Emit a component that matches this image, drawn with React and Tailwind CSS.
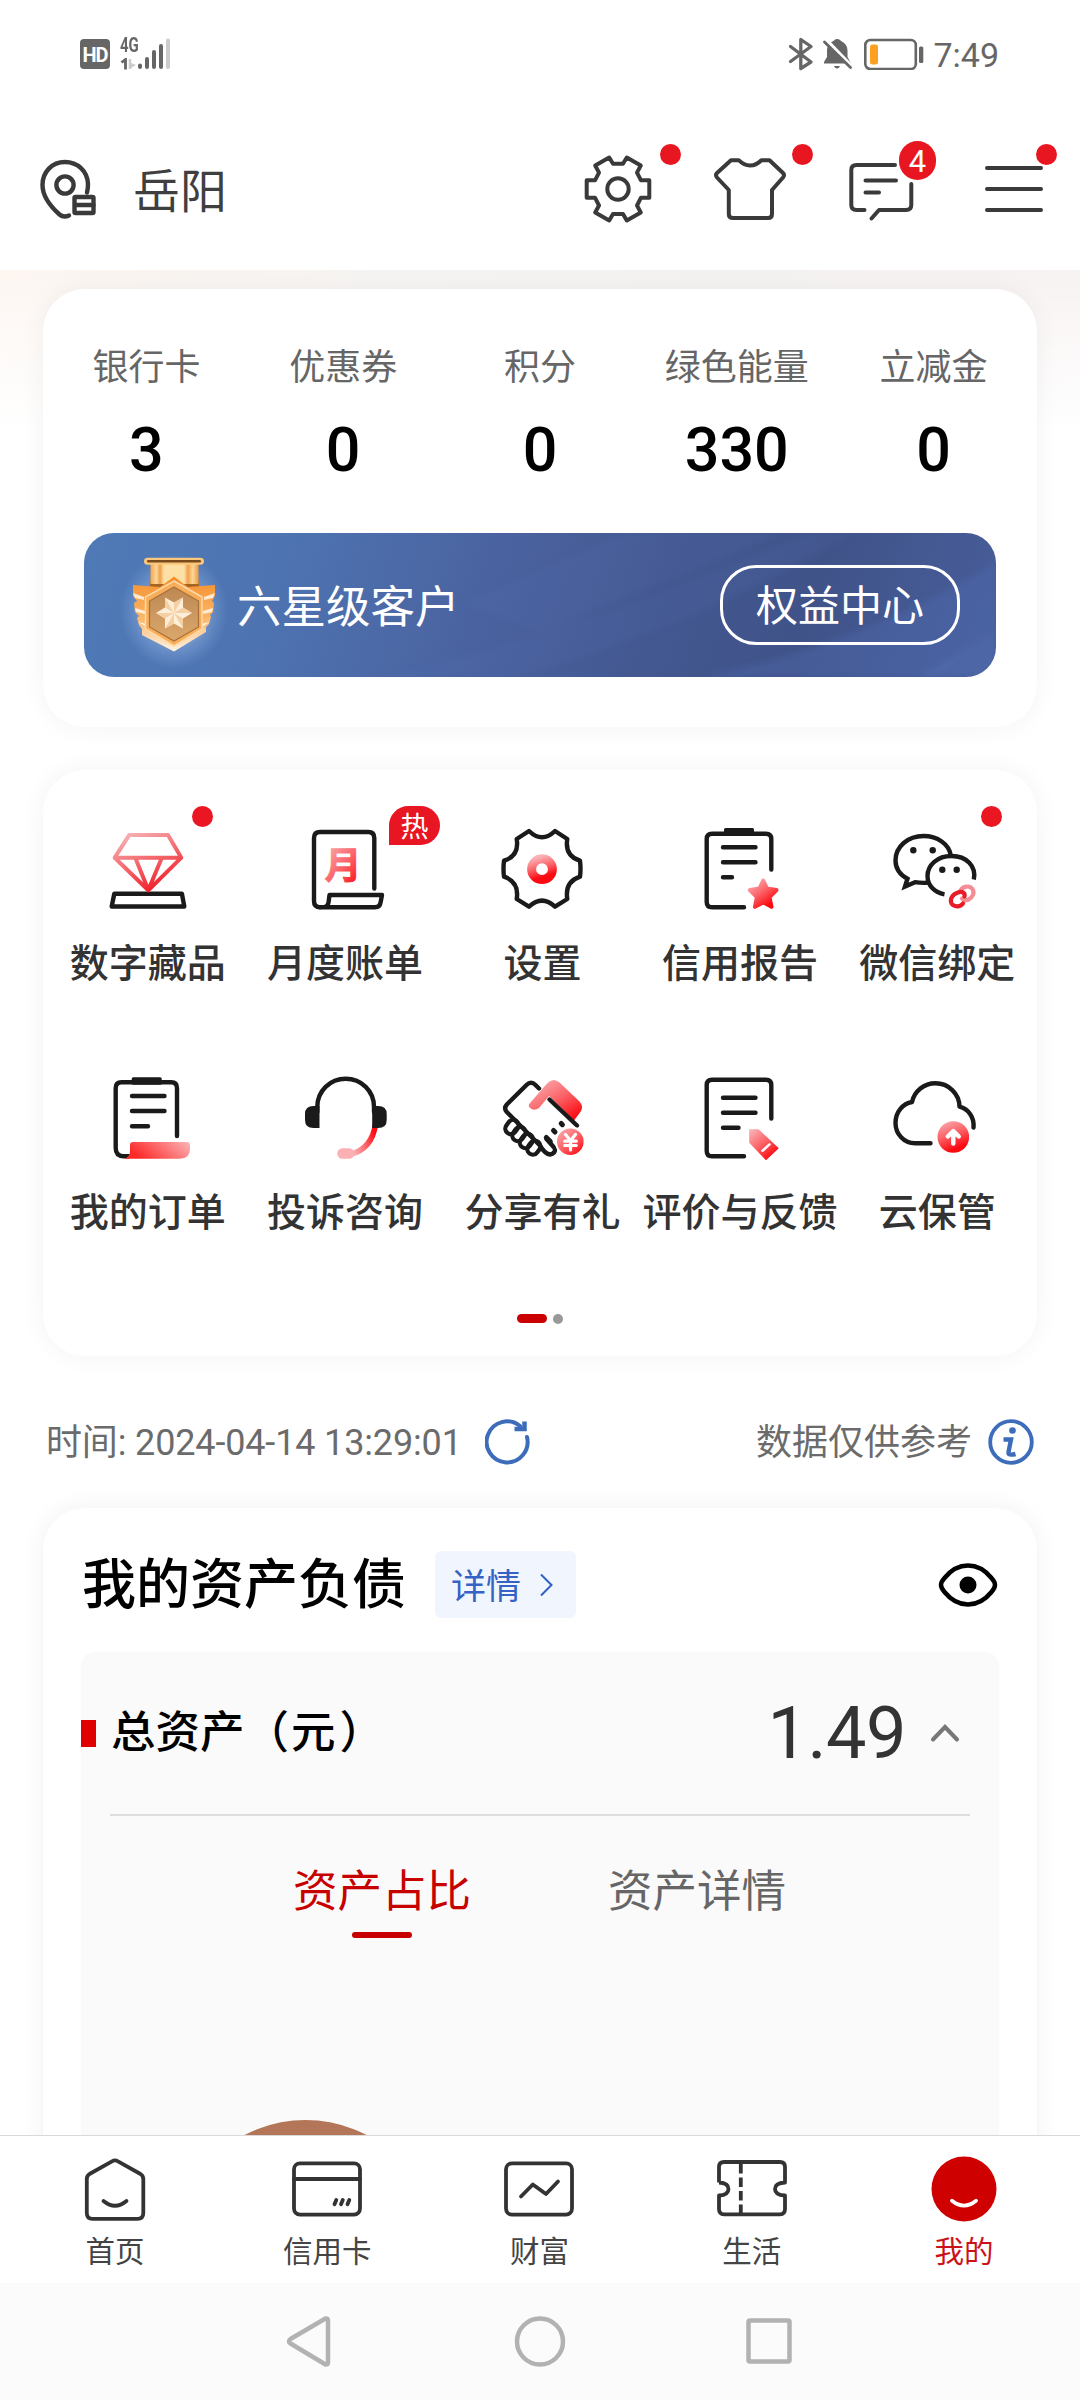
const INK = '#1a1a1a';

function RedGradient({ id, x1 = 0, y1 = 0, x2 = 1, y2 = 1 }) {
  return (
    <defs>
      <linearGradient id={id} x1={x1} y1={y1} x2={x2} y2={y2}>
        <stop offset="0" stopColor="#f9b4b8" />
        <stop offset="0.5" stopColor="#fb6368" />
        <stop offset="0.95" stopColor="#fb0a10" />
      </linearGradient>
    </defs>
  );
}

function FnSvg({ children }) {
  return (
    <svg
      viewBox="0 0 88 88"
      className="h-[88px] w-[88px] overflow-visible"
      fill="none"
      stroke={INK}
      strokeWidth="4.4"
      strokeLinecap="round"
      strokeLinejoin="round"
      aria-hidden="true"
    >
      {children}
    </svg>
  );
}

function DiamondIcon() {
  return (
    <FnSvg>
      <defs>
        <linearGradient id="gem" gradientUnits="userSpaceOnUse" x1="30" y1="8" x2="52" y2="62">
          <stop offset="0" stopColor="#f6adb0" />
          <stop offset="1" stopColor="#f2252e" />
        </linearGradient>
      </defs>
      <path d="M10.3 68.7h67.6l2.4 12.8H7.7z" />
      <path
        stroke="url(#gem)"
        strokeWidth="4"
        d="M25.3 9.9H64l13.3 22.8-33 32.6-33.6-32.6zM10.7 32.8l66.6.01M31.8 34l12.5 31L57.3 34"
      />
    </FnSvg>
  );
}

function BillIcon() {
  return (
    <FnSvg>
      <RedGradient id="bill" />
      <path d="M73.3 63.5V13q0-6-6-6H19q-6 0-6 6v63q0 6.3 6 6.3" />
      <path d="M19 82.3h55q5 0 5.6-5L81 70H28.5L27.6 77q-.6 5.3-6 5.3" />
      <text
        x="42"
        y="53.5"
        textAnchor="middle"
        stroke="url(#bill)"
        strokeWidth="1"
        fill="url(#bill)"
        className="text-[37px] font-bold"
      >
        月
      </text>
    </FnSvg>
  );
}

function SettingsIcon() {
  return (
    <FnSvg>
      <RedGradient id="set" x2="0.3" />
      <path d="M31 6Q44 18.5 57 6L69.3 14Q66.5 31 82 35.7Q83 44 82 51.7Q66.5 57 69.3 74L57 81.7Q44 69.5 31 81.7L18.7 74Q21.5 57 6 51.7Q5 44 6 35.7Q21.5 31 18.7 14Z" />
      <circle cx="44" cy="44.2" r="10.4" stroke="url(#set)" strokeWidth="9" />
    </FnSvg>
  );
}

function ReportIcon() {
  return (
    <FnSvg>
      <RedGradient id="star" x2="0.7" />
      <path d="M75.3 44.5V14q0-5.3-5.3-5.3H16q-5.3 0-5.3 5.3v63q0 5.3 5.3 5.3h32" />
      <rect x="28" y="3" width="30" height="7.5" rx="1.5" fill={INK} stroke="none" />
      <path d="M27 22.3h32.5M27 37.3h32.5M27 52.3h9" />
      <path
        fill="url(#star)"
        stroke="url(#star)"
        strokeWidth="4"
        d="M67.2 55.5l3.8 8 9.5 1.5-7 7 2 9.8-8.3-4.5-8.3 4.5 2-9.8-7-7 9.500-1.500z"
      />
    </FnSvg>
  );
}

function WechatIcon() {
  return (
    <FnSvg>
      <g strokeLinecap="butt" strokeLinejoin="miter">
        <path d="M57.8 30.5C56 19 44.5 11 30.5 11C15 11 2.5 21.5 2.5 35.5C2.5 43.5 7.5 50 14.5 53.8L12 61.5L22 57.2Q28 58.2 34.8 57.8" />
        <path d="M80.8 54.5C83.5 41 73.5 31 58.5 31C44.5 31 34.5 40 34.5 51C34.5 60.5 41.5 67.5 51.5 69.3" />
      </g>
      <g fill={INK} stroke="none">
        <circle cx="20.3" cy="25.3" r="3.2" />
        <circle cx="39.7" cy="25.3" r="3.2" />
        <circle cx="49.3" cy="44.7" r="3.2" />
        <circle cx="63.7" cy="44.7" r="3.2" />
      </g>
      <g strokeWidth="4.2">
        <path d="M67.5 65.5C70 61 76.5 60 79.5 64C82 68 79.5 72.5 75.5 74.5C73 75.8 70.5 75.5 69 73.5" stroke="#f58d94" />
        <path d="M71.5 71.5C72.5 67.5 68.5 66 65 67.5C59 69.5 56.5 74.5 58.5 78.5C61 82.5 67.5 82 70 78.5" stroke="#e81c26" />
      </g>
    </FnSvg>
  );
}

function OrderIcon() {
  return (
    <FnSvg>
      <defs>
        <linearGradient id="order" x1="0" y1="0.3" x2="1" y2="0">
          <stop offset="0.05" stopColor="#fd2a2a" />
          <stop offset="1" stopColor="#fbb5b8" />
        </linearGradient>
      </defs>
      <path d="M73 62V14q0-5.7-5.7-5.7H17.5q-5.800 0-5.800 5.7v60q0 8 8 8.3h5" />
      <rect x="27.7" y="3.2" width="30" height="7.5" rx="1.5" fill={INK} stroke="none" />
      <path d="M28 22h32.5M28 37h32.5M28 52.2h16" />
      <path
        fill="url(#order)"
        stroke="none"
        d="M29 68h54q3 0 3 3v4q0 9.7-10 9.7H19q7-.7 7-7.7v-6q0-3 3-3z"
      />
    </FnSvg>
  );
}

function HeadsetIcon() {
  return (
    <FnSvg>
      <RedGradient id="mic" x1="0" y1="0.6" x2="1" y2="0.2" />
      <path d="M16.3 38V33C16.3 17 29 4.8 44.7 4.8S73 17 73 33v5" />
      <path stroke="url(#mic)" strokeWidth="5.5" strokeLinecap="butt" d="M74.5 50Q71 75 49 80.5" />
      <rect x="36.3" y="74.3" width="17" height="10.5" rx="5.2" fill="#fbb0b4" stroke="none" />
      <path fill={INK} stroke="none" d="M18.5 32v22h-6q-8.5 0-8.5-8V40q0-8 8.5-8zM71.2 32v22h6q8.5 0 8.5-8V40q0-8-8.5-8z" />
    </FnSvg>
  );
}

function ShareIcon() {
  return (
    <FnSvg>
      <RedGradient id="share" x1="0.1" x2="0.9" />
      <path d="M41 14.5L37.5 11Q33 6.5 28.5 11L8.8 30.5Q5.5 34.3 8.8 38L41.5 71Q47 80 52 80.5Q57.5 79.5 57 74.5L48.5 65" />
      <path
        fill="url(#share)"
        stroke="none"
        d="M32 29L49 9.5q6-6.5 12.5-1L81 27q5.5 5.5 1 11.5L76 46.5L51 22L41 34q-5 3.5-9 0-2.5-2.5 0-5z"
      />
      <path d="M51.5 25.5L79 51.5" />
      <path d="M63.2 49.5l1.2 1.2M55.5 56.5l1.5 1.5M48.3 63.5l4 4" strokeWidth="5" />
      <g strokeWidth="4.2">
        <rect x="8.5" y="45.5" width="11" height="15" rx="5.5" transform="rotate(35 14 53)" />
        <rect x="15.5" y="52.5" width="11" height="15" rx="5.5" transform="rotate(35 21 60)" />
        <rect x="23" y="59.5" width="11" height="15" rx="5.5" transform="rotate(35 28.5 67)" />
        <rect x="30.5" y="66.5" width="11" height="14.5" rx="5.5" transform="rotate(35 36 73.5)" />
      </g>
      <circle cx="72.3" cy="67.7" r="14.3" fill="url(#share)" stroke="#fff" strokeWidth="2" />
      <path stroke="#fff" strokeWidth="3.2" d="M67.5 60.5l5 6 5-6M72.5 66.5v9.5M66.7 67.2h11.6M66.7 71.5h11.6" />
    </FnSvg>
  );
}

function FeedbackIcon() {
  return (
    <FnSvg>
      <RedGradient id="pen" x2="0.8" />
      <path d="M75.3 44.5V11q0-5.3-5.3-5.3H16q-5.3 0-5.3 5.3v66q0 5.3 5.3 5.3h32" />
      <path d="M27 23.7h32.5M27 38.7h32.5M27 53.7h15.5" />
      <path
        fill="url(#pen)"
        stroke="url(#pen)"
        strokeWidth="1.5"
        d="M53.8 56h8.5l19.5 18.3L70 85.3L54 68.5z"
      />
      <path stroke="#fff" strokeWidth="2.5" d="M66.5 76.7l7-6.3" />
    </FnSvg>
  );
}

function CloudIcon() {
  return (
    <FnSvg>
      <RedGradient id="cloud" x2="0.4" />
      <path d="M37.5 69.3H22C11 69.3 2.5 60 2.5 49C2.5 38 10 29.5 19 28C21.5 17 31 9.3 42.5 9.3C55.5 9.3 66.3 19.5 66.5 32.7C75.5 35 81.5 43.5 80.5 53.5" />
      <circle cx="60.3" cy="63" r="15.8" fill="url(#cloud)" stroke="none" />
      <path stroke="#fff" d="M60.3 69.5V58M54.8 62.5l5.5-5.5 5.5 5.5" />
    </FnSvg>
  );
}

const stats = [
  { label: '银行卡', value: '3' },
  { label: '优惠券', value: '0' },
  { label: '积分', value: '0' },
  { label: '绿色能量', value: '330' },
  { label: '立减金', value: '0' },
];

const functions = [
  { label: '数字藏品', icon: DiamondIcon, dot: true },
  { label: '月度账单', icon: BillIcon, tag: '热' },
  { label: '设置', icon: SettingsIcon },
  { label: '信用报告', icon: ReportIcon },
  { label: '微信绑定', icon: WechatIcon, dot: true },
  { label: '我的订单', icon: OrderIcon },
  { label: '投诉咨询', icon: HeadsetIcon },
  { label: '分享有礼', icon: ShareIcon },
  { label: '评价与反馈', icon: FeedbackIcon },
  { label: '云保管', icon: CloudIcon },
];

function StatusBar() {
  return (
    <div className="flex h-[108px] shrink-0 items-center pr-[80px] pl-[80px] text-[#666]">
      <span className="flex h-[30px] w-[30px] items-center justify-center rounded-[4px] bg-[#666] pt-[2px] text-[20px] leading-none font-bold tracking-[-1px] text-white">
        HD
      </span>
      <div className="ml-[10px] flex h-[32px] w-[19px] flex-col justify-between">
        <span className="origin-left scale-x-75 text-[20px] leading-[15px] font-bold">4G</span>
        <svg viewBox="0 0 19 12" className="h-[12px] w-[19px]" aria-hidden="true">
          <path d="M1.5 4.5L5.5 1.5V11.5" fill="none" stroke="#666" strokeWidth="2.8" />
          <path d="M10 1v10" stroke="#ccc" strokeWidth="2.5" />
          <path d="M11 5l5 2-5 3z" fill="#ccc" />
        </svg>
      </div>
      <svg viewBox="0 0 34 32" className="-ml-px h-[32px] w-[34px]" fill="none" strokeWidth="4" strokeLinecap="round" aria-hidden="true">
        <path d="M2 27.5v1.5M9 21v8M16 14v15M23 8v21" stroke="#666" />
        <path d="M30 2.5V29" stroke="#ccc" />
      </svg>

      <div className="ml-auto flex items-center">
        <svg viewBox="0 0 26 34" className="h-[34px] w-[26px]" fill="none" stroke="#666" strokeWidth="3.3" strokeLinejoin="round" strokeLinecap="round" aria-hidden="true">
          <path d="M2.5 9.5L23 25 12.8 31.5V2.5L23 9.5 2.5 24.5" />
        </svg>
        <svg viewBox="0 0 30 32" className="ml-[8px] h-[32px] w-[30px]" aria-hidden="true">
          <path fill="#666" d="M15 1c2.5 0 3 1.5 4.5 2.3C24 5.5 25.5 9 25.5 13v6l3.5 6.5H2V24l3-5v-6c0-5 2.5-8.5 6-9.8C12.5 2.5 13 1 15 1zM12 28h6q-1 2.5-3 2.5T12 28z" />
          <path d="M3 .5l27 28" stroke="#fff" strokeWidth="3.5" />
          <path d="M2.5 4L28.5 29.5" stroke="#666" strokeWidth="2.8" strokeLinecap="round" />
        </svg>
        <svg viewBox="0 0 60 32" className="ml-[12px] h-[32px] w-[60px]" aria-hidden="true">
          <rect x="1.3" y="2" width="50.5" height="29" rx="5" fill="none" stroke="#666" strokeWidth="2.6" />
          <rect x="6" y="6.5" width="8" height="20" rx="2.5" fill="#fd9f20" />
          <rect x="55" y="8.5" width="4.3" height="16.5" rx="1.5" fill="#666" />
        </svg>
        <span className="mr-px ml-[9px] pt-px text-[34px] leading-none">7:49</span>
      </div>
    </div>
  );
}

function HeaderIcon({ children, badge }) {
  return (
    <div className="relative flex h-[76px] w-[132px] items-center justify-center">
      <svg
        viewBox="0 0 76 76"
        className="h-[76px] w-[76px]"
        fill="none"
        stroke="#3a3a3a"
        strokeWidth="4"
        strokeLinecap="round"
        strokeLinejoin="round"
        aria-hidden="true"
      >
        {children}
      </svg>
      {badge}
    </div>
  );
}

const headerDot = 'absolute -top-[7px] h-[21px] w-[21px] rounded-full bg-[#e81620]';

function Header() {
  return (
    <header className="flex h-[162px] shrink-0 items-center pl-[38px]">
      <svg viewBox="0 0 60 64" className="h-[64px] w-[60px]" fill="none" stroke="#3a3a3a" strokeWidth="4.4" strokeLinecap="round" strokeLinejoin="round" aria-hidden="true">
        <path d="M49 35.5C50 31.5 50 29 50 27C49.5 14 39.5 5 27 5C14 5 4.5 15 4.5 28C4.5 38 12 49 21.5 57.5Q25.5 61 31 58.5" />
        <circle cx="27" cy="28" r="8.6" />
        <rect x="36.5" y="40" width="19" height="16" rx="1" />
        <path d="M37 48h18.5" />
      </svg>
      <span className="mt-[5px] ml-[35px] text-[47px] leading-none text-[#3f3f3f]">岳阳</span>
      <div className="ml-auto flex">
        <HeaderIcon badge={<span className={`${headerDot} left-[108px]`} />}>
          <path d="M29.2 6.5L33 12.8h10L46.8 6.5L60.8 14.5L57 21.6L61 29.3H69.3V46.7H61L57 54.5L60.8 61.5L46.8 69.5L43 63H33L29.2 69.5L15.2 61.5L19 54.5L15 46.7H6.7V29.3H15L19 21.6L15.2 14.5Z" />
          <circle cx="38" cy="38" r="10.7" />
        </HeaderIcon>
        <HeaderIcon badge={<span className={`${headerDot} left-[108px]`} />}>
          <path d="M19 9.2H26.7Q32 14.5 38 14.5T49.4 9.2H57.5L71 22Q73 24 71 26.5L60 39V63Q60 67 56 67H21Q16.8 67 16.8 63V39L5 26.5Q3 24 5 22Z" />
        </HeaderIcon>
        <HeaderIcon
          badge={
            <span className="absolute -top-[10px] left-[83px] flex h-[39px] w-[37px] items-center justify-center rounded-full bg-[#e81620] pt-[2px] text-[31px] leading-none text-white">
              4
            </span>
          }
        >
          <path d="M51 14H12.5Q7.3 14 7.3 19V54Q7.3 59 12.5 59H20.5M27.5 67.5L35 59H62Q67.3 59 67.3 54V33M21.5 29.5H52M21.5 41.5H35" />
        </HeaderIcon>
        <HeaderIcon badge={<span className={`${headerDot} left-[88px]`} />}>
          <path d="M11 17H65M11 38H65M11 59H65" />
        </HeaderIcon>
      </div>
    </header>
  );
}

function Medal() {
  return (
    <svg viewBox="0 0 96 104" className="h-[104px] w-[96px] overflow-visible" aria-hidden="true">
      <defs>
        <radialGradient id="glow">
          <stop offset="0.5" stopColor="#c4dcff" stopOpacity="0.4" />
          <stop offset="1" stopColor="#a8ccff" stopOpacity="0" />
        </radialGradient>
        <linearGradient id="ribbon">
          <stop offset="0" stopColor="#f3a550" />
          <stop offset="0.12" stopColor="#fdd795" />
          <stop offset="0.2" stopColor="#f0a04a" />
          <stop offset="0.28" stopColor="#fee0a4" />
          <stop offset="0.7" stopColor="#fee0a4" />
          <stop offset="0.78" stopColor="#f0a04a" />
          <stop offset="0.88" stopColor="#fdd795" />
          <stop offset="1" stopColor="#ee9a45" />
        </linearGradient>
        <linearGradient id="rim" x1="0" y1="0" x2="0" y2="1">
          <stop offset="0" stopColor="#f58f2c" />
          <stop offset="0.55" stopColor="#fbb667" />
          <stop offset="1" stopColor="#fff3e4" />
        </linearGradient>
        <linearGradient id="core" x1="0" y1="0" x2="0" y2="1">
          <stop offset="0" stopColor="#bd8853" />
          <stop offset="1" stopColor="#dba86c" />
        </linearGradient>
      </defs>
      <ellipse cx="48" cy="58" rx="54" ry="58" fill="url(#glow)" />
      <path fill="#a5641f" d="M24 28h49v6l-10 4H34l-10-4z" />
      <rect x="24.5" y="8" width="48" height="23" fill="url(#ribbon)" />
      <rect x="18" y="4.7" width="60" height="7" rx="3.5" fill="#fbc77a" />
      <rect x="21" y="7" width="54" height="2.6" rx="1.3" fill="#7a4c1c" />
      <path
        fill="url(#rim)"
        d="M48 23.5L62 34l27-2v11l-3 5 2 2-1 9-3 3 1 2-2 7-3 3v5L48 98.5 16 82v-6l-3-4-2-7 2-2-4-4-1-9 3-2-4-5V32l27 2z"
      />
      <path fill="#fff" opacity="0.75" d="M7 40l11 4v3l-9-2zM9 55l10 3v3l-9-2zM12 69l9 2v3zM89 40l-11 4v3l9-2zM87 55l-10 3v3l9-2zM84 69l-9 2v3z" />
      <path fill="#f8ad5a" stroke="#ffd9a6" strokeWidth="1.5" d="M48 28L76 44V76L48 93 19.5 76V44z" />
      <path fill="url(#core)" stroke="#a87038" strokeWidth="1.2" d="M48 34L72.5 48V74L48 88 23.5 74V48z" />
      <path
        fill="#fdeedb"
        d="M39 44.5L48 49.5 57 44.5V54.5L66 60 57 65.5V75.5L48 70.5 39 75.5V65.5L30 60 39 54.5z"
      />
      <path
        fill="#f5d0a2"
        d="M48 60L39 44.5V54.5zM48 60V49.5L57 44.5zM48 60L57 54.5 66 60zM48 60L57 65.5V75.5zM48 60V70.5L39 75.5zM48 60L39 65.5 30 60z"
      />
    </svg>
  );
}

function AccountCard() {
  return (
    <section className="mx-[43px] mt-[19px] h-[438px] rounded-[42px] bg-white pt-[61px] shadow-[0_0_26px_rgba(0,0,0,0.05)]">
      <div className="grid grid-cols-5 px-[5px]">
        {stats.map(({ label, value }) => (
          <div key={label} className="flex flex-col items-center">
            <span className="text-[36px] leading-none text-[#666]">{label}</span>
            <span className="mt-[34px] text-[61px] leading-none font-medium text-black">{value}</span>
          </div>
        ))}
      </div>
      <div className="relative mx-[41px] mt-[52px] flex h-[144px] items-center overflow-hidden rounded-[30px] bg-[linear-gradient(108deg,#4e7ab6_0%,#4e74b2_20%,#4a629f_45%,#435891_62%,#405389_78%,#485e9b_100%)] pr-[36px] pl-[42px]">
        <svg viewBox="0 0 912 144" className="absolute inset-0 h-full w-full blur-[3px]" aria-hidden="true">
          <path d="M455 100L700 0H540L380 70z" fill="#5a76bc" opacity="0.13" />
          <path d="M300 144Q520 90 720 0H770Q600 100 430 144z" fill="#5a76bc" opacity="0.12" />
          <path d="M620 144Q780 110 912 30V100L850 144z" fill="#5470b8" opacity="0.3" />
          <path d="M835 144L912 100V144z" fill="#5878bd" opacity="0.35" />
        </svg>
        <div className="relative">
          <Medal />
        </div>
        <span className="relative mt-[6px] ml-[15px] text-[44.5px] leading-none text-white">六星级客户</span>
        <span className="relative ml-auto flex h-[80px] w-[240px] items-center justify-center rounded-[36px] border-[3px] border-white pt-[3px] text-[42px] leading-none text-white">
          权益中心
        </span>
      </div>
    </section>
  );
}

function FunctionCard() {
  return (
    <section className="mx-[43px] mt-[43px] h-[586px] rounded-[42px] bg-white pt-[55px] shadow-[0_0_26px_rgba(0,0,0,0.05)]">
      <div className="grid grid-cols-5 gap-y-[90px] pr-px pl-[6px]">
        {functions.map(({ label, icon: Icon, dot, tag }) => (
          <div key={label} className="flex flex-col items-center">
            <div className="relative">
              <Icon />
              {dot && <span className="absolute -top-[19px] left-[88px] h-[21px] w-[21px] rounded-full bg-[#ea1621]" />}
              {tag && (
                <span className="absolute -top-[19px] left-[88px] flex h-[39px] w-[51px] items-center justify-center rounded-[20px] rounded-bl-none bg-[#e81623] pt-[4px] text-[28px] leading-none text-white">
                  {tag}
                </span>
              )}
            </div>
            <span className="mt-[32px] text-[39px] leading-none font-medium whitespace-nowrap text-[#333]">{label}</span>
          </div>
        ))}
      </div>
      <div className="mt-[81px] flex justify-center gap-[6px]">
        <span className="h-[9px] w-[30px] rounded-full bg-[#cb0000]" />
        <span className="h-[10px] w-[10px] rounded-full bg-[#999]" />
      </div>
    </section>
  );
}

function UpdateRow() {
  return (
    <div className="flex h-[152px] items-center pt-[19px] pr-[46px] pl-[46px] text-[36px] leading-none text-[#6b6b6b]">
      <span className="pt-[2px] tracking-[-0.15px]">时间: 2024-04-14 13:29:01</span>
      <svg viewBox="0 0 46 46" className="ml-[23px] h-[46px] w-[46px]" fill="none" stroke="#3c6cba" strokeWidth="4" strokeLinecap="round" aria-hidden="true">
        <path d="M42 18A20.5 20.5 0 1 1 35 7" />
        <path d="M39.5 2.5V10H29.5" strokeLinecap="butt" strokeWidth="4.5" />
      </svg>
      <span className="ml-auto pt-[2px]">数据仅供参考</span>
      <svg viewBox="0 0 46 46" className="ml-[16px] h-[46px] w-[46px]" fill="none" stroke="#3c6cba" aria-hidden="true">
        <circle cx="23" cy="23" r="20.8" strokeWidth="3.8" />
        <circle cx="24.5" cy="11.5" r="3.3" fill="#3c6cba" stroke="none" />
        <path d="M15.5 20.5H23L20.5 33Q20 37 27.5 35" strokeWidth="4.4" />
      </svg>
    </div>
  );
}

function AssetCard() {
  return (
    <section className="mx-[43px] h-[800px] rounded-t-[42px] bg-white px-[38px] pt-[43px] shadow-[0_0_26px_rgba(0,0,0,0.06)]">
      <div className="flex h-[67px] items-center">
        <h2 className="mt-[3px] ml-px text-[54px] leading-none font-medium text-black">我的资产负债</h2>
        <span className="ml-[29px] flex h-[67px] w-[141px] items-center rounded-[6px] bg-[#f1f6fe] pl-[16px] text-[35px] leading-none text-[#3662c4]">
          <span className="mt-[6px]">详情</span>
          <svg viewBox="0 0 16 24" className="ml-[17px] h-[24px] w-[16px]" fill="none" stroke="#2f60c4" strokeWidth="2" aria-hidden="true">
            <path d="M3 1.5L13.5 12 3 22.5" />
          </svg>
        </span>
        <svg viewBox="0 0 60 46" className="mr-px ml-auto h-[46px] w-[60px]" fill="none" stroke="#000" strokeWidth="4.5" aria-hidden="true">
          <path d="M3 23Q3 20 6.5 16C13 8 21 3.5 30 3.5S47 8 53.5 16Q57 20 57 23T53.5 30C47 38 39 42.5 30 42.5S13 38 6.5 30Q3 26 3 23Z" />
          <circle cx="30" cy="23" r="8.5" fill="#000" stroke="none" />
        </svg>
      </div>
      <div className="mt-[34px] h-[700px] rounded-t-[14px] bg-[#fafafa]">
        <div className="flex h-[162px] items-center">
          <span className="h-[27px] w-[15px] bg-[#e00000]" />
          <span className="mt-px ml-[15px] flex text-[44.5px] leading-none font-medium text-black">
            <span>总资产</span>
            <span>（</span>
            <span className="ml-[2px]">元</span>
            <span className="ml-[4px]">）</span>
          </span>
          <span className="mt-px ml-auto text-[72px] leading-none tracking-[-0.5px] text-[#333]">1.49</span>
          <svg viewBox="0 0 30 20" className="mr-[39px] ml-[24px] h-[20px] w-[30px]" fill="none" stroke="#777" strokeWidth="4" strokeLinecap="round" aria-hidden="true">
            <path d="M3 16.5L15 4 27 16.5" />
          </svg>
        </div>
        <div className="mx-[29px] h-[2px] bg-[#dedede]" />
        <div className="mt-[54px] flex gap-[137px] pl-[212px] text-[44.5px] leading-none">
          <div className="flex flex-col items-center text-[#c70000]">
            <span>资产占比</span>
            <span className="mt-[17px] h-[6px] w-[60px] rounded-full bg-[#c70000]" />
          </div>
          <span className="text-[#666]">资产详情</span>
        </div>
        <div className="mt-[182px] ml-[93px] h-[263px] w-[263px] rounded-full border-[60px] border-[#b47658]" />
      </div>
    </section>
  );
}

const tabs = [
  {
    label: '首页',
    icon: (
      <path d="M33 8.3Q36 6.6 39 8.3L61.5 21Q64.3 22.7 64.3 26V60Q64.3 65.8 58.5 65.8H13.5Q7.8 65.8 7.8 60V26Q7.8 22.7 10.5 21ZM24.5 48Q36 57.5 47.5 48" />
    ),
  },
  {
    label: '信用卡',
    icon: (
      <>
        <rect x="3" y="10.3" width="66" height="51.3" rx="6" />
        <path d="M3 26H69M43.5 51.3L45.3 47M50 51.3L51.8 47M56.5 51.3L58.3 47" />
      </>
    ),
  },
  {
    label: '财富',
    icon: (
      <>
        <rect x="3" y="10.3" width="66" height="51.3" rx="6" />
        <path d="M18 43.5L29.8 31.5 43 41 55 28.5" />
      </>
    ),
  },
  {
    label: '生活',
    icon: (
      <>
        <path strokeLinecap="butt" d="M3 29.5V14Q3 9 8 9H64Q69 9 69 14V29.5Q59 30 59 36T69 42.5V56Q69 61.3 64 61.3H8Q3 61.3 3 56V42.5Q12.5 42 12.5 36T3 29.5" />
        <path strokeLinecap="butt" strokeDasharray="9.5 4" d="M24.8 11V61" />
      </>
    ),
  },
  {
    label: '我的',
    active: true,
    icon: (
      <>
        <circle cx="36" cy="36" r="32.5" fill="#cf0000" stroke="none" />
        <path stroke="#fff" d="M24 47.8Q36 57.5 48 47.8" />
      </>
    ),
  },
];

function TabBar() {
  return (
    <nav className="grid h-[148px] shrink-0 grid-cols-5 border-t border-[#d9d9d9] bg-white pt-[17px] pr-[10px] pl-[9px]">
      {tabs.map(({ label, icon, active }) => (
        <div key={label} className="flex flex-col items-center">
          <svg
            viewBox="0 0 72 72"
            className="h-[72px] w-[72px]"
            fill="none"
            stroke="#333"
            strokeWidth="3.8"
            strokeLinecap="round"
            strokeLinejoin="round"
            aria-hidden="true"
          >
            {icon}
          </svg>
          <span className={active ? 'mt-[13px] text-[29.5px] leading-none text-[#cc1219]' : 'mt-[13px] text-[29.5px] leading-none text-[#444]'}>
            {label}
          </span>
        </div>
      ))}
    </nav>
  );
}

function SystemNav() {
  return (
    <div className="flex h-[117px] shrink-0 items-center justify-center bg-[#fbfbfb]">
      <svg viewBox="0 0 510 54" className="h-[54px] w-[510px]" fill="none" stroke="#b2b2b2" strokeWidth="4.5" strokeLinejoin="round" aria-hidden="true">
        <path d="M40.5 3.5L5.5 24Q2.5 26.5 5.5 28.5L40.5 49.5Q43 49.5 43 47.5V5.5Q43 3.5 40.5 3.5Z" />
        <circle cx="255" cy="26.5" r="23" />
        <rect x="463.5" y="5.5" width="41" height="41" rx="1.5" />
      </svg>
    </div>
  );
}

export default function App() {
  return (
    <div className="flex h-[2400px] w-[1080px] flex-col overflow-hidden bg-white font-['Roboto','Noto_Sans_CJK_SC',sans-serif]">
      <StatusBar />
      <Header />
      <main className="flex min-h-0 flex-1 flex-col overflow-hidden bg-[linear-gradient(to_bottom,rgba(255,255,255,0)_0px,rgba(255,255,255,0.4)_60px,#fff_160px),linear-gradient(to_right,#fdf6f1,#f6f4f2_35%,#f4f2f1_70%,#f8f2f2)]">
        <div className="flex shrink-0 flex-col">
          <AccountCard />
          <FunctionCard />
          <UpdateRow />
          <AssetCard />
        </div>
      </main>
      <TabBar />
      <SystemNav />
    </div>
  );
}
